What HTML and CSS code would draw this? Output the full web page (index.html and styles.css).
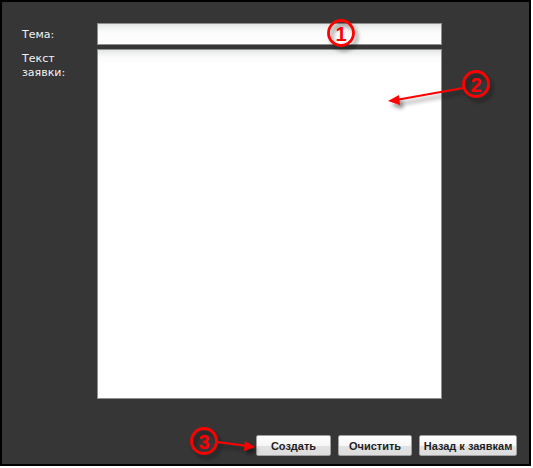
FILE: index.html
```html
<!DOCTYPE html>
<html lang="ru">
<head>
<meta charset="utf-8">
<link rel="stylesheet" href="styles.css">
</head>
<body>
<div class="frame">
  <div class="form">
    <div class="row row-subject">
      <label class="label">Тема:</label>
      <div class="input"></div>
    </div>
    <div class="row row-text">
      <label class="label">Текст<br>заявки:</label>
      <div class="textarea"></div>
    </div>
    <div class="actions">
      <button class="btn btn-create">Создать</button>
      <button class="btn btn-clear">Очистить</button>
      <button class="btn btn-back">Назад к заявкам</button>
    </div>
  </div>
  <svg class="notes" width="531" height="466" viewBox="0 0 531 466">
    <defs>
      <filter id="sh" x="-50%" y="-50%" width="200%" height="200%">
        <feGaussianBlur in="SourceAlpha" stdDeviation="2"/>
        <feOffset dx="3" dy="4" result="b"/>
        <feComponentTransfer><feFuncA type="linear" slope="0.45"/></feComponentTransfer>
        <feMerge><feMergeNode/><feMergeNode in="SourceGraphic"/></feMerge>
      </filter>
    </defs>
    <g filter="url(#sh)" fill="none" stroke="#f00" stroke-width="2.8">
      <circle cx="339" cy="31" r="12.5"/>
      <circle cx="474" cy="82" r="12.5"/>
      <circle cx="202" cy="439" r="12.5"/>
      <line x1="461" y1="86" x2="394" y2="98" stroke-width="2"/>
      <line x1="215" y1="440" x2="246" y2="444" stroke-width="2"/>
    </g>
    <g filter="url(#sh)" fill="#f00">
      <polygon points="386,99 397,93 398,103"/>
      <polygon points="253,445 243,439 242,449"/>
    </g>
    <g class="num" fill="#f00">
      <text x="339" y="38.5">1</text>
      <text x="474" y="89.5">2</text>
      <text x="202" y="446.5">3</text>
    </g>
  </svg>
</div>
</body>
</html>
```

FILE: styles.css
```css
html, body {
  margin: 0;
  padding: 0;
  background: #fff;
}
.frame {
  position: relative;
  width: 527px;
  height: 462px;
  border: 2px solid #000;
  background: #363636;
  font-family: "DejaVu Sans", Verdana, sans-serif;
}
.form {
  padding: 21px 0 0 20px;
  display: flex;
  flex-direction: column;
}
.row {
  display: flex;
  align-items: flex-start;
}
.row-subject {
  height: 22px;
  margin-bottom: 4px;
}
.label {
  width: 75px;
  color: #f2f2f2;
  font-size: 11px;
  line-height: 14px;
}
.row-subject .label {
  padding-top: 5px;
}
.row-text .label {
  padding-top: 3px;
}
.input {
  width: 343px;
  height: 20px;
  border: 1px solid #8e8e8e;
  background: linear-gradient(#e4e6e6, #fafafa 7px, #fff);
}
.textarea {
  width: 343px;
  height: 348px;
  border: 1px solid #8e8e8e;
  background: linear-gradient(#e4e6e6, #fafafa 7px, #fff 14px);
}
.actions {
  display: flex;
  justify-content: flex-end;
  gap: 7px;
  margin-top: 36px;
  padding-right: 12px;
}
.btn {
  height: 21px;
  padding: 0;
  border: 1px solid #a0a0a0;
  border-radius: 2px;
  background: linear-gradient(#ffffff, #f6f6f6 50%, #e2e2e2 52%, #dcdcdc);
  color: #1e1e1e;
  font-family: "Liberation Sans", Arial, sans-serif;
  font-weight: bold;
  font-size: 11px;
  cursor: pointer;
}
.btn-create { width: 75px; }
.btn-clear { width: 74px; }
.btn-back { width: 98px; }
.notes {
  position: absolute;
  left: 0;
  top: 0;
  pointer-events: none;
}
.num text {
  font-family: "Liberation Sans", Arial, sans-serif;
  font-weight: bold;
  font-size: 20px;
  text-anchor: middle;
}
```
